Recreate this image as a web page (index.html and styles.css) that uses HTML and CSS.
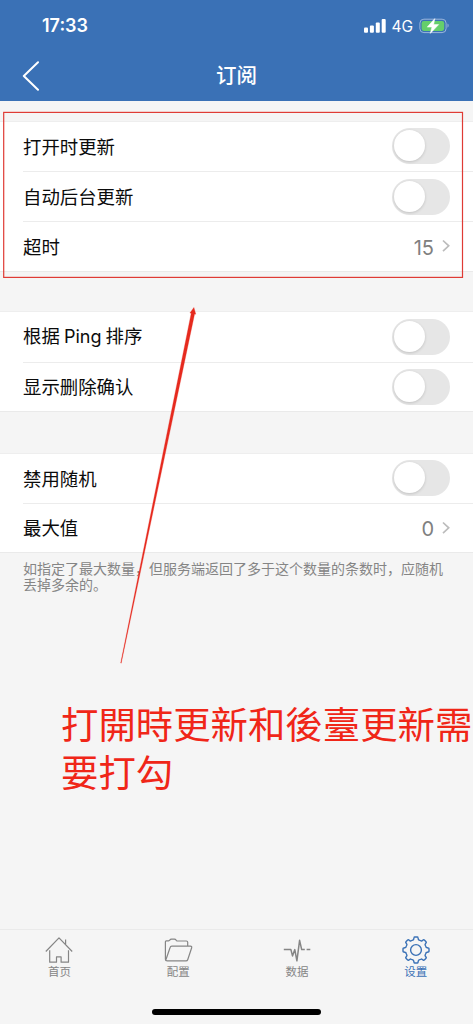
FILE: index.html
```
<!DOCTYPE html>
<html lang="zh-CN">
<head>
<meta charset="utf-8">
<title>订阅</title>
<link rel="stylesheet" href="styles.css">
</head>
<body>
<div class="screen">
  <header class="header">
    <div class="status">
      <span class="time">17:33</span>
      <div class="indicators">
        <svg class="signal" width="22" height="14" viewBox="0 0 22 14" fill="#fff"><rect x="0" y="8.6" width="4" height="5.2" rx="1"/><rect x="5.9" y="6.4" width="4" height="7.4" rx="1"/><rect x="11.8" y="3.4" width="4" height="10.4" rx="1"/><rect x="17.7" y="0" width="4" height="13.8" rx="1"/></svg>
        <span class="network">4G</span>
        <svg class="battery" width="31" height="16" viewBox="0 0 31 16"><rect x=".9" y="1.2" width="26.2" height="13.4" rx="4" fill="none" stroke="#9bb6dc" stroke-width="1"/><rect x="2.6" y="2.9" width="22.6" height="10" rx="2.3" fill="#65cf6b"/><path d="M28.5 5.6v4.2c1.5-.7 1.5-3.5 0-4.2z" fill="#9bb6dc"/><path d="M15.8.6 8.2 9.1h4.7L11.3 15.4 19.7 6.6h-5z" fill="#fff" stroke="#fff" stroke-width=".5"/></svg>
      </div>
    </div>
    <div class="navbar">
      <svg class="back" width="18" height="30" viewBox="0 0 18 30" fill="none" stroke="#fff" stroke-width="2" stroke-linecap="round" stroke-linejoin="round"><path d="M16 1.3 1.8 15 16 28.8"/></svg>
      <h1 class="title">订阅</h1>
    </div>
  </header>

  <main class="content">
    <section class="group first">
      <div class="row"><span class="label">打开时更新</span><span class="switch"></span></div>
      <div class="row"><span class="label">自动后台更新</span><span class="switch"></span></div>
      <div class="row"><span class="label">超时</span><span class="value">15<svg width="8" height="14" viewBox="0 0 8 14"><path d="M1 1.5 6.7 6.8 1 12.1"/></svg></span></div>
    </section>
    <section class="group">
      <div class="row"><span class="label">根据 <span class="latin">Ping</span> 排序</span><span class="switch"></span></div>
      <div class="row"><span class="label">显示删除确认</span><span class="switch"></span></div>
    </section>
    <section class="group">
      <div class="row"><span class="label">禁用随机</span><span class="switch"></span></div>
      <div class="row"><span class="label">最大值</span><span class="value">0<svg width="8" height="14" viewBox="0 0 8 14"><path d="M1 1.5 6.7 6.8 1 12.1"/></svg></span></div>
    </section>
    <p class="note">如指定了最大数量，但服务端返回了多于这个数量的条数时，应随机<br>丢掉多余的。</p>
    <p class="callout" lang="zh-TW">打開時更新和後臺更新需<br>要打勾</p>
  </main>

  <footer class="footer">
    <nav class="tabs">
      <div class="tab">
        <svg width="30" height="30" viewBox="-15 -15 30 30"><path d="M-13.2 1.5 0-12.1 13.2 1.5M-9.3.3v11.9h6.8V6.9h4.6v5.3h7.4V.3M6.6-5.2v-5.3"/></svg>
        <span>首页</span>
      </div>
      <div class="tab">
        <svg width="30" height="30" viewBox="-15 -15 30 30"><path d="M-12.6 9V-8.2q0-.9.9-.9h2.3q.8 0 1.2-.8.6-1 1.7-1h2.9q1.1 0 1.6 1 .4.9 1.2.9h9.1q1.4 0 1.4 1.3v3.9M-12.6 9q0 1.9 1.9 1.9H8q1.3 0 1.7-1.2L13.6-2q.6-1.8-1.2-1.8H-6.2q-1.3 0-1.7 1.3L-12 9.5"/></svg>
        <span>配置</span>
      </div>
      <div class="tab">
        <svg width="30" height="30" viewBox="-15 -15 30 30"><path d="M-13.2-.4h7.1l1.6 6.3 2.3-6.3 2.1 11.2 2.7-20.5 2.1 9.3h3.1M9.6-.4h3.7" stroke-width="1.5"/></svg>
        <span>数据</span>
      </div>
      <div class="tab active">
        <svg width="30" height="30" viewBox="-15 -15 30 30"><defs><path id="tooth" d="M-4.1-9.9Q-2.5-9.5-2.25-11.1L-2-12.3Q-1.9-13-1.2-13H1.2Q1.9-13 2-12.3L2.25-11.1Q2.5-9.5 4.1-9.9"/></defs><use href="#tooth"/><use href="#tooth" transform="rotate(45)"/><use href="#tooth" transform="rotate(90)"/><use href="#tooth" transform="rotate(135)"/><use href="#tooth" transform="rotate(180)"/><use href="#tooth" transform="rotate(225)"/><use href="#tooth" transform="rotate(270)"/><use href="#tooth" transform="rotate(315)"/><circle r="5.4"/></svg>
        <span>设置</span>
      </div>
    </nav>
    <div class="home-bar"></div>
  </footer>

  <svg class="annotation" width="473" height="1024" viewBox="0 0 473 1024"><rect x="3.7" y="112.4" width="458.8" height="165" fill="none" stroke="#df3b35" stroke-width="1.2"/><path d="M120.7 663 191.2 313.2 189.9 313 193.9 307.5 195.8 314.2 194.6 313.9 121.2 663.2z" fill="#e62a1e" stroke="#e62a1e" stroke-width=".3"/></svg>
</div>
</body>
</html>
```
FILE: styles.css
```
* { box-sizing: border-box; }
body { margin: 0; font-family: Inter, "Noto Sans CJK SC", sans-serif; }
.screen { position: relative; width: 473px; height: 1024px; display: flex; flex-direction: column; background: #f5f5f5; overflow: hidden; }
.header { height: 101px; background: #3a71b6; color: #fff; flex: none; }
.status { height: 50px; display: flex; justify-content: space-between; align-items: center; padding: 2px 23.5px 0 42px; }
.time { font-size: 18px; font-weight: 600; line-height: 24px; }
.indicators { display: flex; align-items: center; }
.network { font-size: 15.5px; line-height: 20px; margin: 1px 6px 0 6px; width: 21px; }
.navbar { height: 51px; display: grid; grid-template-columns: 1fr auto 1fr; align-items: center; padding: 0 22px; }
.title { margin: 0; padding-bottom: 3px; font-family: "Noto Sans CJK SC", sans-serif; font-size: 20.5px; line-height: 28px; font-weight: 500; }
.content { flex: 1; padding-top: 19.6px; }
.group { background: #fff; border-top: 1px solid #eeeeee; border-bottom: 1px solid #eaeaea; padding-left: 23px; margin-bottom: 40.5px; }
.row { height: 49.4px; display: flex; justify-content: space-between; align-items: center; padding-right: 23px; font-family: "Noto Sans CJK SC", sans-serif; font-size: 18.4px; line-height: 26px; color: #0b0b0b; }
.row + .row { border-top: 1px solid #ececec; }
.label { padding-bottom: 1.4px; }
.first { margin-bottom: 39.3px; }
.first .row { height: 49.8px; }
.group:last-of-type { margin-bottom: 0; }
.latin { font-family: Inter, sans-serif; font-size: 18px; }
.switch { width: 58px; height: 36px; border-radius: 18px; background: #e6e6e6; padding: 2px; }
.switch::before { content: ""; display: block; width: 31px; height: 31px; border-radius: 50%; background: #fff; box-shadow: 0 1px 3px rgba(0,0,0,.16); }
.value { font-family: Inter, sans-serif; font-size: 20px; color: #808080; display: flex; align-items: center; gap: 8px; padding-top: 2px; }
.value svg { fill: none; stroke: #bcbcbc; stroke-width: 1.7; margin-top: -3px; }
.note { margin: 6.4px 0 0 23px; font-family: "Noto Sans CJK SC", sans-serif; font-size: 14px; line-height: 16px; color: #858585; white-space: nowrap; }
.callout { margin: 107px 0 0 61px; font-family: "Noto Sans CJK TC", sans-serif; font-size: 37.4px; line-height: 48.5px; color: #f02618; white-space: nowrap; }
.footer { height: 95px; flex: none; border-top: 1px solid #eaeaea; display: flex; flex-direction: column; align-items: center; justify-content: space-between; padding-bottom: 9px; }
.tabs { width: 100%; display: grid; grid-template-columns: repeat(4, 118.8px); padding-top: 5.4px; }
.tab { display: flex; flex-direction: column; align-items: center; color: #858585; font-family: "Noto Sans CJK SC", sans-serif; font-size: 11.5px; line-height: 13px; }
.tab svg { fill: none; stroke: #858585; stroke-width: 1.2; stroke-linejoin: round; }
.active { color: #3a71b6; }
.tab.active svg { stroke: #3a71b6; stroke-width: 1.4; }
.home-bar { width: 169px; height: 6px; border-radius: 3px; background: #000; }
.annotation { position: absolute; inset: 0; pointer-events: none; }
```
